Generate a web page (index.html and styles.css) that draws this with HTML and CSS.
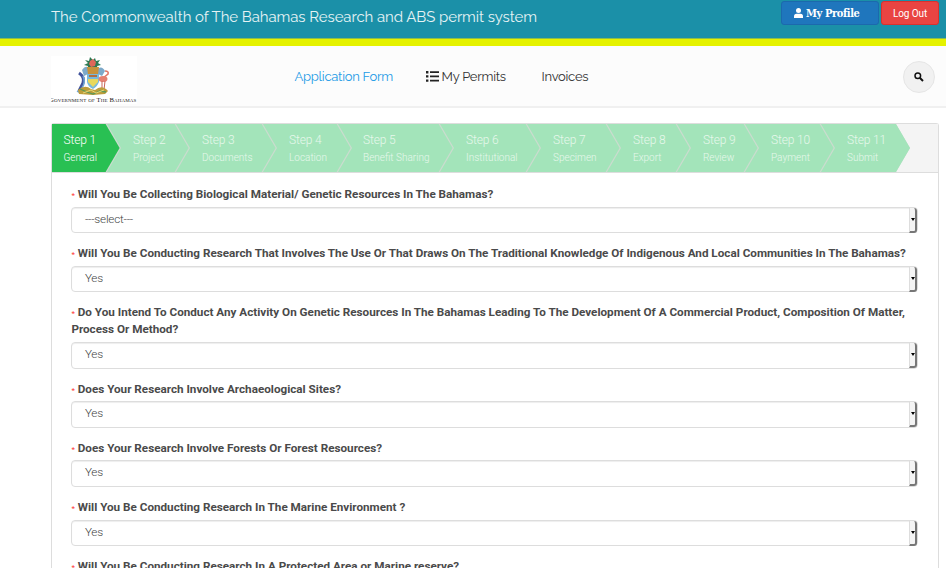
FILE: index.html
```html
<!DOCTYPE html>
<html lang="en">
<head>
<meta charset="utf-8">
<title>Bahamas Research and ABS permit system</title>
<link rel="stylesheet" href="styles.css">
</head>
<body>
<header class="topbar">
  <div class="brand">The Commonwealth of The Bahamas Research and ABS permit system</div>
  <div class="account">
    <a class="btn profile"><svg width="9" height="10" viewBox="0 0 9 10"><circle cx="4.5" cy="2.6" r="2.5"/><path d="M0 10V8.3Q0 5.8 2.5 5.8h4Q9 5.8 9 8.3V10z"/></svg><span>My Profile</span></a>
    <a class="btn logout">Log Out</a>
  </div>
</header>
<div class="navbar">
  <div class="logo">
    <svg class="crest" width="34" height="40" viewBox="0 0 34 40">
      <path fill="#2c7952" d="M14 1l3 3 2-2 1 3 4-1-2 3 3 2-4 1 1 3-5-2-6 3 1-4-4-1 4-2-3-3 4 1z"/>
      <path fill="#df675a" d="M14 5l3-2 3 3-1 4-4 1-2-3z"/>
      <path fill="#7da9c9" d="M6 14q4-6 8-1l3-2 4 2q5-4 8 2l-3 5-4-2-5 2-5-2-4 2z"/>
      <path fill="#c8923a" d="M11 11h12l-1 7H12z"/>
      <path fill="#78b9dc" d="M11 18h12v8q-2 5-6 7-5-2-6-7z"/>
      <path fill="#e8d85b" d="M12 23h10v3l-5 5-5-5z"/>
      <path fill="#b06f42" d="M13 19h8v2h-8z"/>
      <path fill="none" stroke="#41539c" stroke-width="3" d="M3 17q6 4 4 10l-4 8"/>
      <path fill="none" stroke="#71a6d4" stroke-width="1.5" d="M7 20q3 6-1 12M1 35l4 2"/>
      <path fill="none" stroke="#e07665" stroke-width="1.6" d="M29 15q4 0 3 3l-5 4"/>
      <ellipse cx="27" cy="23" rx="4.5" ry="3" fill="#e58070"/>
      <path fill="none" stroke="#ca6557" d="M26 25v9M29 25l-1 9"/>
      <path fill="#bd9d3b" d="M2 34q7-6 13-1l4 1q7-6 13 1l-3 3-12 1-14-1z"/>
      <path fill="none" stroke="#5c9959" stroke-width="1.3" d="M4 33l7 3 6 2 7-3 6 1"/>
      <path fill="none" stroke="#e9d774" d="M7 37l8-3 5 3 8-3"/>
    </svg>
    <div class="motto">Government of The Bahamas</div>
  </div>
  <nav>
    <a class="nav-form">Application Form</a>
    <a class="nav-permits"><svg width="13" height="11" viewBox="0 0 13 11"><path d="M0 0h2.4v2.4H0zM4 .3h9v1.8H4zM0 4.2h2.4v2.4H0zM4 4.5h9v1.8H4zM0 8.4h2.4v2.4H0zM4 8.7h9v1.8H4z"/></svg><span>My Permits</span></a>
    <a class="nav-invoices">Invoices</a>
  </nav>
  <div class="search"><svg width="10" height="10" viewBox="0 0 10 10"><circle cx="3.8" cy="3.8" r="2.8" fill="none" stroke="#111" stroke-width="1.5"/><path d="M6 6l3 3" stroke="#111" stroke-width="2"/></svg></div>
</div>
<main class="panel">
  <ol class="steps">
    <li class="active"><b>Step 1</b><small>General</small></li>
    <li><b>Step 2</b><small>Project</small></li>
    <li><b>Step 3</b><small>Documents</small></li>
    <li><b>Step 4</b><small>Location</small></li>
    <li><b>Step 5</b><small>Benefit Sharing</small></li>
    <li><b>Step 6</b><small>Institutional</small></li>
    <li><b>Step 7</b><small>Specimen</small></li>
    <li><b>Step 8</b><small>Export</small></li>
    <li><b>Step 9</b><small>Review</small></li>
    <li><b>Step 10</b><small>Payment</small></li>
    <li><b>Step 11</b><small>Submit</small></li>
  </ol>
  <form class="fields">
    <div class="field"><label><i>*</i> <span>Will You Be Collecting Biological Material/ Genetic Resources In The Bahamas?</span></label><div class="select">---select---<span class="arrow"></span></div></div>
    <div class="field"><label><i>*</i> <span>Will You Be Conducting Research That Involves The Use Or That Draws On The Traditional Knowledge Of Indigenous And Local Communities In The Bahamas?</span></label><div class="select">Yes<span class="arrow"></span></div></div>
    <div class="field"><label><i>*</i> <span>Do You Intend To Conduct Any Activity On Genetic Resources In The Bahamas Leading To The Development Of A Commercial Product, Composition Of Matter,<br>Process Or Method?</span></label><div class="select">Yes<span class="arrow"></span></div></div>
    <div class="field"><label><i>*</i> <span>Does Your Research Involve Archaeological Sites?</span></label><div class="select">Yes<span class="arrow"></span></div></div>
    <div class="field"><label><i>*</i> <span>Does Your Research Involve Forests Or Forest Resources?</span></label><div class="select">Yes<span class="arrow"></span></div></div>
    <div class="field"><label><i>*</i> <span>Will You Be Conducting Research In The Marine Environment ?</span></label><div class="select">Yes<span class="arrow"></span></div></div>
    <div class="field"><label><i>*</i> <span>Will You Be Conducting Research In A Protected Area or Marine reserve?</span></label></div>
  </form>
</main>
</body>
</html>
```
FILE: styles.css
```css
* { box-sizing: border-box; }
html, body { height: 568px; overflow: hidden; }
body { margin: 0; background: #fff; font-family: Roboto, sans-serif; font-size: 12px; color: #444; }

.topbar { height: 46px; background: #1b90a8; border-bottom: 7px solid #e5f200; box-shadow: inset 0 -1px #8bbc4e; display: flex; justify-content: space-between; padding: 1px 7px 0 51px; }
.brand { font: 15px/33px Raleway, Lato, sans-serif; color: #e6f3f5; white-space: nowrap; letter-spacing: -.08px; }
.account { display: flex; gap: 2px; }
.btn { height: 24px; border-radius: 3px; display: flex; align-items: center; color: #fff; }
.profile { width: 98px; padding-left: 12px; gap: 3px; background: #1f76bd; border: 1px solid #1c69ad; font: bold 11px "DejaVu Serif Condensed", "DejaVu Serif", serif; font-stretch: condensed; letter-spacing: -.4px; white-space: nowrap; }
.profile svg { fill: #fff; }
.logout { width: 58px; justify-content: center; background: #e94442; border: 1px solid #dc302d; font-size: 10px; letter-spacing: -.1px; }

.navbar { height: 62px; background: #fcfcfc; border-bottom: 2px solid #f0f0f0; display: flex; padding-left: 51px; padding-right: 11px; }
.logo { width: 86px; height: 48px; margin-top: 10px; background: #fff; overflow: hidden; }
.crest { display: block; margin-left: 25px; }
.motto { font: 6.7px/7px "Liberation Serif", serif; font-variant: small-caps; letter-spacing: .12px; color: #222; white-space: nowrap; margin-left: -2px; }
nav { display: flex; flex: 1; margin-left: 157.5px; font: 13px/61px Raleway, Lato, sans-serif; letter-spacing: -.26px; color: #333; white-space: nowrap; }
.nav-form { width: 131px; color: #1c9be6; }
.nav-permits { width: 116px; display: flex; align-items: center; gap: 3px; }
.nav-permits svg { fill: #222; }
.search { width: 32px; height: 32px; margin-top: 15px; border: 1px solid #e6e6e6; border-radius: 50%; background: #f1f1f1; display: flex; align-items: center; justify-content: center; }
.search svg { margin-bottom: 1px; }

.panel { width: 888px; height: 460px; margin: 15px 0 0 51px; border: 1px solid #ddd; border-bottom: 0; border-radius: 3px 3px 0 0; }
.steps { list-style: none; margin: 0; padding: 0; height: 49px; display: flex; background: #f4f4f4; border-bottom: 1px solid #ddd; }
.steps li { --line: 1.4px; position: relative; z-index: 1; height: 48px; margin-right: -14px; padding: 8px 0 0 26px; background: #cbdccf; clip-path: polygon(0 0, calc(100% - 14px) 0, 100% 50%, calc(100% - 14px) 100%, 0 100%); color: #e7f8ec; white-space: nowrap; flex: none; font-weight: 300; }
.steps li::before { content: ""; position: absolute; z-index: -1; inset: 0; background: #a3e4ba; clip-path: polygon(0 0, calc(100% - 14px - var(--line)) 0, calc(100% - var(--line)) 50%, calc(100% - 14px - var(--line)) 100%, 0 100%); }
.steps li:last-child::before { clip-path: none; }
.steps b { display: block; font-size: 12px; line-height: 17px; font-weight: 300; letter-spacing: -.15px; }
.steps small { display: block; font-size: 10px; line-height: 17px; }
.steps li:nth-child(1) { width: 69px; z-index: 11; padding-left: 11.5px; color: #fff; }
.steps li.active::before { background: #29c053; }
.steps li:nth-child(2) { width: 83px; z-index: 10; }
.steps li:nth-child(3) { width: 101px; z-index: 9; }
.steps li:nth-child(4) { width: 89px; z-index: 8; }
.steps li:nth-child(5) { width: 116px; z-index: 7; padding-left: 25px; }
.steps li:nth-child(6) { width: 101px; z-index: 6; }
.steps li:nth-child(7) { width: 94px; z-index: 5; }
.steps li:nth-child(8) { width: 84px; z-index: 4; }
.steps li:nth-child(9) { width: 82px; z-index: 3; }
.steps li:nth-child(10) { width: 90px; z-index: 2; }
.steps li:nth-child(11) { width: 89px; }

.fields { padding: 13px 20px 0 19.4px; display: flex; flex-direction: column; gap: 11.7px; }
.field { display: flex; flex-direction: column; gap: 3.7px; }
.field + .field { margin-top: .3px; }
label { display: block; line-height: 17px; font-size: 11.7px; font-weight: 700; color: #4a4a4a; white-space: nowrap; }
label i { font: 8px/8px Roboto, sans-serif; color: #f33; }
.select { width: 847px; height: 26.5px; padding-left: 12.5px; border: 1px solid #ddd; border-radius: 4px; box-shadow: inset 0 1px 1px #eee; display: flex; justify-content: space-between; line-height: 23.5px; font-size: 11.7px; letter-spacing: -.2px; font-weight: 300; color: #444; }
.arrow { width: 8px; height: 25px; background: #f4f4f4; border: solid #777; border-width: 0 2px 2px 0; border-left: 1px solid #ddd; border-radius: 0 3px 3px 0; display: flex; align-items: center; justify-content: center; }
.arrow::after { content: ""; border: 2.5px solid transparent; border-top: 3px solid #000; border-bottom: 0; }
```
